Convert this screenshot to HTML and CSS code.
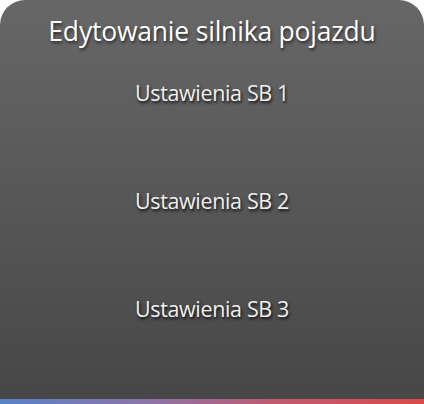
FILE: index.html
```html
<!DOCTYPE html>
<html lang="pl">
<head>
<meta charset="utf-8">
<link rel="stylesheet" href="styles.css">
</head>
<body>
<div class="panel">
  <div class="title">Edytowanie silnika pojazdu</div>
  <div class="list">
    <div class="item">Ustawienia SB 1</div>
    <div class="item">Ustawienia SB 2</div>
    <div class="item">Ustawienia SB 3</div>
  </div>
</div>
<div class="bar"></div>
</body>
</html>
```
FILE: styles.css
```css
html, body {
  margin: 0;
  padding: 0;
  background: #ffffff;
}
body {
  width: 424px;
  height: 404px;
  overflow: hidden;
  font-family: "Open Sans", "Noto Sans", sans-serif;
}
.panel {
  height: 399px;
  border-radius: 25px 25px 0 0;
  background: linear-gradient(to bottom, #676767 0%, #474747 100%);
  display: flex;
  flex-direction: column;
}
.title {
  height: 62px;
  line-height: 62px;
  text-align: center;
  color: #ffffff;
  font-size: 26.5px;
  letter-spacing: -0.2px;
  text-shadow: 1px 2px 3px rgba(0,0,0,0.6);
}
.list {
  display: flex;
  flex-direction: column;
  gap: 46px;
}
.item {
  height: 62px;
  line-height: 62px;
  text-align: center;
  color: #efefef;
  font-size: 21.5px;
  font-weight: 500;
  letter-spacing: -0.35px;
  text-shadow: 1px 2px 3px rgba(0,0,0,0.85);
}
.bar {
  height: 5px;
  background: linear-gradient(to right, #5a82c8 0%, #8c74a8 35%, #c05a70 65%, #da4a4a 100%);
}
```
